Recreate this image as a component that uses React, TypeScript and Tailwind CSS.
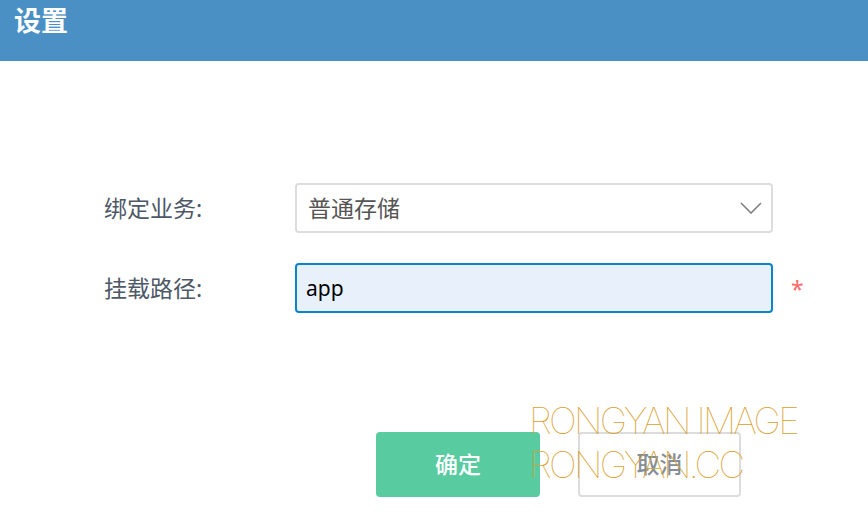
import React, { useState } from 'react';

export default function App() {
  const [service, setService] = useState('普通存储');
  const [path, setPath] = useState('app');

  return (
    <div className="relative w-[868px] h-[520px] overflow-hidden bg-white" style={{ fontFamily: '"Noto Sans", "Noto Sans CJK SC", sans-serif' }}>
      <div className="h-[61px] bg-[#4b90c5] px-[14px] pt-[2px]">
        <h1 className="text-[27px] font-bold leading-[38px] text-white">设置</h1>
      </div>

      <div className="pt-[122px] pl-[104px]">
        <div className="flex items-center h-[50px]">
          <label className="w-[191px] text-[23px] text-[#4e5866]">绑定业务:</label>
          <div className="relative w-[478px] h-[50px] rounded-[4px] border-2 border-[#dcdcdc] flex items-center pl-[11px]">
            <span className="text-[23px] text-[#555]">{service}</span>
            <svg className="absolute right-[9px] top-[17px]" width="22" height="12" viewBox="0 0 22 12" fill="none">
              <path d="M1 1 L11 11 L21 1" stroke="#808080" strokeWidth="1.6" />
            </svg>
          </div>
        </div>

        <div className="flex items-center h-[50px] mt-[30px]">
          <label className="w-[191px] text-[23px] text-[#4e5866]">挂载路径:</label>
          <input
            className="w-[478px] h-[50px] rounded-[4px] border-2 border-[#0a85c9] bg-[#e8f0fc] px-[9px] text-[21px] text-black outline-none"
            value={path}
            onChange={e => setPath(e.target.value)}
          />
          <span className="ml-[18px] mt-[2px] text-[23px] text-[#ff6b6b]">*</span>
        </div>

        <div className="flex mt-[119px] ml-[272px] gap-[38px]">
          <button className="w-[164px] h-[65px] rounded-[4px] bg-[#58cba0] text-[23px] font-medium text-white">确定</button>
          <button onClick={() => setService('普通存储')} className="w-[163px] h-[65px] rounded-[4px] border-2 border-[#dcdcdc] text-[23px] font-medium text-[#848e96]">取消</button>
        </div>
      </div>

      {/* watermark over the buttons */}
      <div className="absolute left-[529px] top-[399px] pointer-events-none text-[#d9a02c] font-thin text-[37px] leading-[44px] tracking-[-2.7px]" style={{ fontFamily: 'Inter, sans-serif' }}>
        <div>RONGYAN IMAGE</div>
        <div>RONGYAN.CC</div>
      </div>
    </div>
  );
}
